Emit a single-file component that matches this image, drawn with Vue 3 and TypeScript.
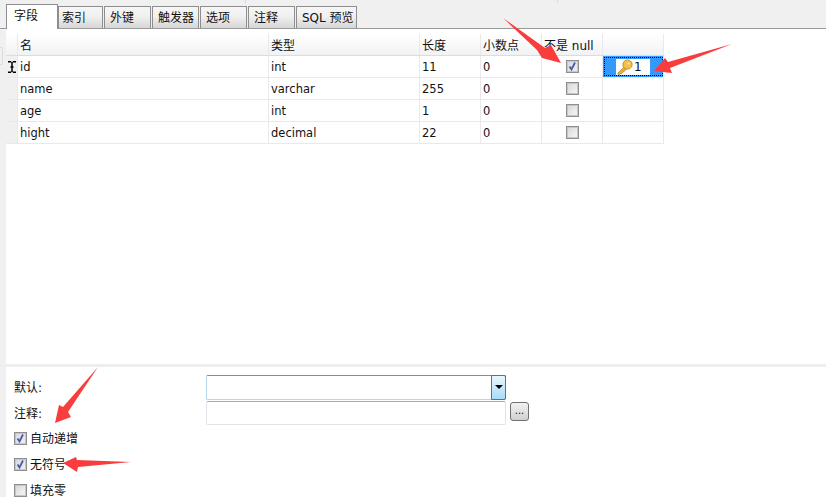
<script setup lang="ts">
const tabs: string[] = ['索引', '外键', '触发器', '选项', '注释', 'SQL 预览']
const cols: string[] = ['名', '类型', '长度', '小数点', '不是 null', '']
interface Row { name: string; type: string; len: string; dec: string; notNull: boolean; key: boolean }
const rows: Row[] = [
  { name: 'id', type: 'int', len: '11', dec: '0', notNull: true, key: true },
  { name: 'name', type: 'varchar', len: '255', dec: '0', notNull: false, key: false },
  { name: 'age', type: 'int', len: '1', dec: '0', notNull: false, key: false },
  { name: 'hight', type: 'decimal', len: '22', dec: '0', notNull: false, key: false },
]
const options = [
  { label: '自动递增', on: true },
  { label: '无符号', on: true },
  { label: '填充零', on: false },
]
</script>

<template>
  <div class="page">
    <div class="tabbar">
      <div class="tab active">字段</div>
      <div
        v-for="(t, i) in tabs"
        :key="t"
        class="tab"
        :class="{ wide: t.startsWith('SQL'), narrow: i === 0 }"
      >{{ t }}</div>
      <span class="tick t1"></span>
      <span class="tick t2"></span>
    </div>

    <div class="body">
      <span class="bump"></span>
      <div class="grid">
        <div class="row head">
          <div class="cell stub"></div>
          <div v-for="(c, i) in cols" :key="i" class="cell" :class="'c' + i">{{ c }}</div>
        </div>
        <div v-for="r in rows" :key="r.name" class="row">
          <div class="cell stub">
            <svg v-if="r.key" class="ibeam" width="8" height="12" viewBox="0 0 8 12">
              <path d="M0 0.75H3.2M4.8 0.75H8M4 1V11M0 11.25H3.2M4.8 11.25H8M2.5 6H5.5" stroke="#000" stroke-width="1.5" fill="none" />
            </svg>
          </div>
          <div class="cell c0">{{ r.name }}</div>
          <div class="cell c1">{{ r.type }}</div>
          <div class="cell c2">{{ r.len }}</div>
          <div class="cell c3">{{ r.dec }}</div>
          <div class="cell c4 center">
            <span class="check" :class="{ on: r.notNull }">
              <svg v-if="r.notNull" width="11" height="11" viewBox="0 0 11 11">
                <path d="M2.5 5.5L4.5 8.5L8 1.5" stroke="#4a5aa0" stroke-width="1.8" fill="none" />
              </svg>
            </span>
          </div>
          <div class="cell c5" :class="{ selected: r.key }">
            <div v-if="r.key" class="keybox">
              <svg width="17" height="17" viewBox="0 0 17 17">
                <path d="M9 7L1.5 14.5L3 16L4.5 14.5L5.5 15L6 13.5L7.5 13L11 9.5" fill="#e6ac3a" stroke="#c48d25" stroke-width="0.8" />
                <circle cx="11.5" cy="5.5" r="4.6" fill="#f3c04a" stroke="#c48d25" />
                <circle cx="12.5" cy="4.5" r="1.1" fill="#fbe9a8" />
              </svg>
              <span class="keynum">1</span>
            </div>
          </div>
        </div>
      </div>
    </div>

    <div class="divider"></div>

    <div class="form">
      <div class="field">
        <label class="lbl">默认:</label>
        <div class="combo">
          <div class="drop"><span class="tri"></span></div>
        </div>
      </div>
      <div class="field second">
        <label class="lbl">注释:</label>
        <div class="input"></div>
        <div class="dots">...</div>
      </div>
      <div v-for="o in options" :key="o.label" class="opt">
        <span class="check" :class="{ on: o.on }">
          <svg v-if="o.on" width="11" height="11" viewBox="0 0 11 11">
            <path d="M2.5 5.5L4.5 8.5L8 1.5" stroke="#4a5aa0" stroke-width="1.8" fill="none" />
          </svg>
        </span>
        <span class="optlabel">{{ o.label }}</span>
      </div>
    </div>

    <svg class="arrows" width="826" height="497" viewBox="0 0 826 497">
      <g fill="#f93c3c">
        <polygon points="503,18 545,48 551,45 561,63 542,58 537,50" />
        <polygon points="732,44 670,68 672,73 654,71 665,58 668,62" />
        <polygon points="98,367 68,412 71,417 55,423 59,405 63,407" />
        <polygon points="131,462 78,467 77,472 63,463 76,457 77,460" />
      </g>
    </svg>
  </div>
</template>

<style>
html, body { margin: 0; background: #fff; }
</style>

<style scoped>
.page {
  position: relative;
  width: 826px;
  height: 497px;
  overflow: hidden;
  display: flex;
  flex-direction: column;
  background: #f0f0f0;
  font-family: "DejaVu Sans", "Noto Sans CJK SC", sans-serif;
  font-size: 12px;
  color: #111;
}
.tabbar {
  position: relative;
  height: 28px;
  flex: none;
  display: flex;
  align-items: flex-end;
  gap: 1px;
  padding-left: 6px;
  background: #f0f0f0;
  border-bottom: 1px solid #999;
}
.tick { position: absolute; top: 0; width: 1px; height: 3px; background: #dadada; }
.t1 { left: 245px; }
.t2 { left: 557px; }
.tab {
  width: 47px;
  height: 22px;
  box-sizing: border-box;
  border: 1px solid #8e8e8e;
  border-bottom: none;
  background: linear-gradient(#f6f6f6, #f0f0f0 45%, #d6d6d6);
  font-size: 12px;
  line-height: 23px;
  padding-left: 5px;
  white-space: nowrap;
}
.tab.narrow { width: 45px; padding-left: 3px; }
.tab.wide { width: 61px; }
.tab.active {
  width: 52px;
  height: 25px;
  margin-bottom: -1px;
  margin-right: -1px;
  padding-left: 7px;
  background: #fff;
  line-height: 23px;
  position: relative;
}
.body {
  position: relative;
  flex: 1;
  margin-left: 6px;
  padding-top: 5px;
  min-height: 0;
  background: #fff;
}
.bump {
  position: absolute;
  left: -6px;
  top: 18px;
  width: 2px;
  height: 16px;
  border: 1px solid #dcdcdc;
  border-left: none;
  border-radius: 0 2px 2px 0;
}
.grid { width: 658px; }
.row {
  display: flex;
  height: 22px;
  box-sizing: border-box;
  border-bottom: 1px solid #e9e9e9;
}
.row.head { background: linear-gradient(#fff, #f1f2f4); border-bottom: 1px solid #dcdcdc; }
.cell {
  box-sizing: border-box;
  border-right: 1px solid #e9e9e9;
  padding-left: 2px;
  line-height: 23px;
  font-size: 11.5px;
  white-space: nowrap;
}
.head .cell { font-size: 12px; line-height: 24px; }
.stub { width: 12px; padding: 0; background: #f0f0f0; position: relative; }
.head .stub { background: transparent; }
.c0 { width: 251px; }
.c1 { width: 151px; }
.c2, .c3, .c4 { width: 61px; }
.c5 { width: 61px; padding: 0; }
.center { display: flex; align-items: center; justify-content: center; padding: 0; }
.head .c4 { padding-left: 2px; }
.ibeam { position: absolute; left: 2px; top: 5px; }
.check {
  width: 13px;
  height: 13px;
  box-sizing: border-box;
  border: 1px solid #8f8f8f;
  background: linear-gradient(135deg, #d6d6d6, #f8f8f8);
  display: inline-flex;
  align-items: center;
  justify-content: center;
  box-shadow: inset 0 0 0 1px #c6c6c6;
  flex: none;
}
.check.on { background: linear-gradient(135deg, #d6d8e2, #f0f1f6); }
.selected {
  height: 21px;
  background: #3399ff;
  outline: 1px dotted #000;
  outline-offset: -2px;
  display: flex;
  justify-content: center;
}
.keybox {
  width: 34px;
  height: 16px;
  margin-top: 3px;
  background: #fff;
  display: flex;
  align-items: center;
  line-height: 16px;
}
.keynum { font-size: 12px; margin-left: 1px; color: #111; }
.divider { flex: none; height: 3px; background: #eeeeee; }
.form {
  flex: none;
  height: 130px;
  padding: 8px 0 0 8px;
  margin-left: 6px;
  box-sizing: border-box;
  overflow: hidden;
  background: #fff;
}
.field { display: flex; align-items: center; height: 24px; }
.second { margin-top: 2px; }
.lbl { width: 192px; font-size: 12px; padding-bottom: 2px; }
.combo {
  width: 300px;
  height: 25px;
  box-sizing: border-box;
  border: 1px solid #569ac6;
  border-radius: 2px;
  border-bottom-color: #b5d5ea;
  border-left-color: #b5d5ea;
  display: flex;
  justify-content: flex-end;
}
.drop {
  width: 15px;
  margin: -1px -1px -1px 0;
  border: 1px solid #3d7ba8;
  border-radius: 0 2px 2px 0;
  background: linear-gradient(#e9f6fd, #a9dbf7);
  display: flex;
  align-items: center;
  justify-content: center;
  box-sizing: border-box;
}
.tri {
  width: 0;
  height: 0;
  border-left: 4px solid transparent;
  border-right: 4px solid transparent;
  border-top: 4px solid #000;
}
.input {
  width: 300px;
  height: 24px;
  box-sizing: border-box;
  border: 1px solid #e2e3ea;
  border-top-color: #aaa;
  border-radius: 2px;
}
.dots {
  width: 19px;
  height: 19px;
  margin-left: 4px;
  margin-top: -3px;
  box-sizing: border-box;
  border: 1px solid #707070;
  border-radius: 3px;
  background: linear-gradient(#f2f2f2, #d0d0d0);
  text-align: center;
  font-size: 10px;
  line-height: 15px;
}
.opt { display: flex; align-items: center; height: 13px; margin-top: 13px; }
.second + .opt { margin-top: 7px; }
.optlabel { margin-left: 3px; font-size: 12px; line-height: 12px; }
.arrows { position: absolute; left: 0; top: 0; pointer-events: none; }
</style>
